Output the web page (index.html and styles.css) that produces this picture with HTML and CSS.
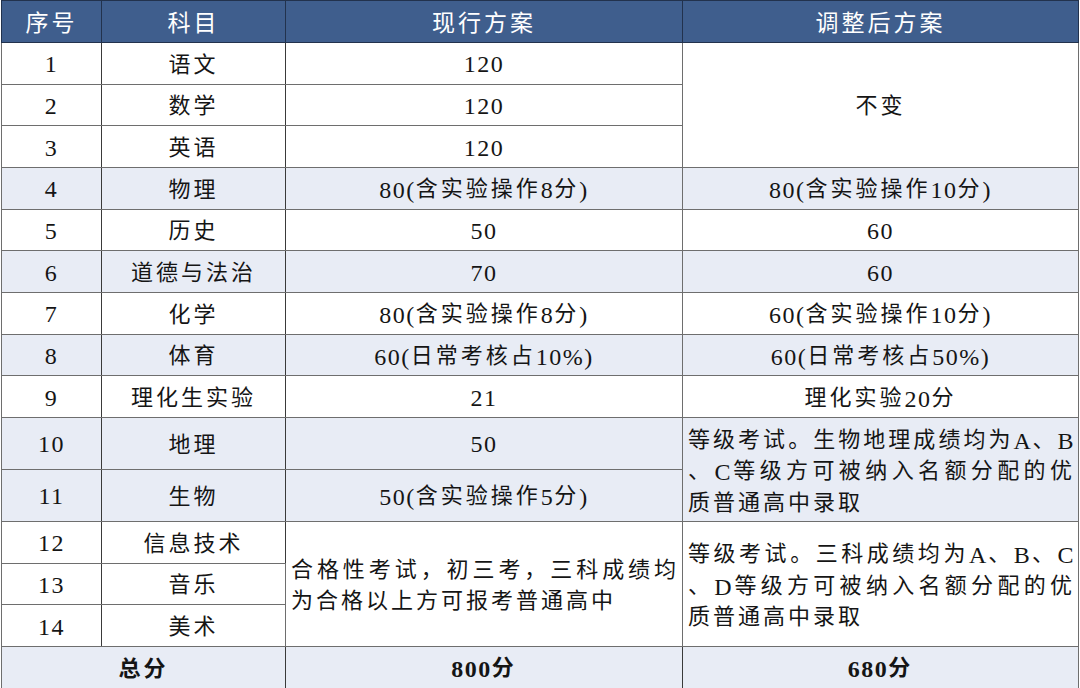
FILE: index.html
```html
<!DOCTYPE html>
<html lang="zh-CN">
<head>
<meta charset="utf-8">
<title>中考科目分值调整</title>
<link rel="stylesheet" href="styles.css">
</head>
<body>
<table class="plan">
  <colgroup>
    <col class="c-no"><col class="c-subj"><col class="c-cur"><col class="c-new">
  </colgroup>
  <thead>
    <tr class="head"><th>序号</th><th>科目</th><th>现行方案</th><th>调整后方案</th></tr>
  </thead>
  <tbody>
    <tr class="r"><td class="num">1</td><td>语文</td><td class="num">120</td><td rowspan="3" class="same">不变</td></tr>
    <tr class="r"><td class="num">2</td><td>数学</td><td class="num">120</td></tr>
    <tr class="r"><td class="num">3</td><td>英语</td><td class="num">120</td></tr>
    <tr class="r alt"><td class="num">4</td><td>物理</td><td><span class="lat">80(</span>含实验操作<span class="lat">8</span>分<span class="lat">)</span></td><td><span class="lat">80(</span>含实验操作<span class="lat">10</span>分<span class="lat">)</span></td></tr>
    <tr class="r"><td class="num">5</td><td>历史</td><td class="num">50</td><td class="num">60</td></tr>
    <tr class="r alt"><td class="num">6</td><td>道德与法治</td><td class="num">70</td><td class="num">60</td></tr>
    <tr class="r"><td class="num">7</td><td>化学</td><td><span class="lat">80(</span>含实验操作<span class="lat">8</span>分<span class="lat">)</span></td><td><span class="lat">60(</span>含实验操作<span class="lat">10</span>分<span class="lat">)</span></td></tr>
    <tr class="r alt"><td class="num">8</td><td>体育</td><td><span class="lat">60(</span>日常考核占<span class="lat">10%)</span></td><td><span class="lat">60(</span>日常考核占<span class="lat">50%)</span></td></tr>
    <tr class="r"><td class="num">9</td><td>理化生实验</td><td class="num">21</td><td>理化实验<span class="lat">20</span>分</td></tr>
    <tr class="r tall alt"><td class="num">10</td><td>地理</td><td class="num">50</td>
      <td rowspan="2" class="para">
        <span class="ln">等级考试。生物地理成绩均为<span class="lat">A</span>、<span class="lat">B</span></span>
        <span class="ln">、<span class="lat">C</span>等级方可被纳入名额分配的优</span>
        <span class="ln last">质普通高中录取</span>
      </td></tr>
    <tr class="r tall alt"><td class="num">11</td><td>生物</td><td><span class="lat">50(</span>含实验操作<span class="lat">5</span>分<span class="lat">)</span></td></tr>
    <tr class="r"><td class="num">12</td><td>信息技术</td>
      <td rowspan="3" class="para">
        <span class="ln">合格性考试，初三考，三科成绩均</span>
        <span class="ln last">为合格以上方可报考普通高中</span>
      </td>
      <td rowspan="3" class="para">
        <span class="ln">等级考试。三科成绩均为<span class="lat">A</span>、<span class="lat">B</span>、<span class="lat">C</span></span>
        <span class="ln">、<span class="lat">D</span>等级方可被纳入名额分配的优</span>
        <span class="ln last">质普通高中录取</span>
      </td></tr>
    <tr class="r"><td class="num">13</td><td>音乐</td></tr>
    <tr class="r"><td class="num">14</td><td>美术</td></tr>
    <tr class="r alt total"><td colspan="2">总分</td><td><span class="lat">800</span>分</td><td><span class="lat">680</span>分</td></tr>
  </tbody>
</table>
</body>
</html>
```

FILE: styles.css
```css
html, body {
  margin: 0;
  padding: 0;
  background: #ffffff;
}

.plan {
  margin-left: 1px;
  width: 1077px;
  border-collapse: collapse;
  table-layout: fixed;
  font-family: "Noto Sans CJK SC", "Liberation Serif", serif;
  font-size: 22px;
  letter-spacing: 3px;
  color: #151515;
}

.c-no { width: 100px; }
.c-subj { width: 184px; }
.c-cur { width: 397px; }
.c-new { width: 396px; }

.plan th,
.plan td {
  box-sizing: border-box;
  border: 1px solid #6e6e6e;
  padding: 0 0 3px 0;
  text-align: center;
  vertical-align: middle;
  font-weight: 400;
  line-height: 30px;
}

.plan td:nth-child(1),
.plan td:nth-child(2) {
  border-right-color: #3a3a3a;
}

.head th {
  height: 42px;
  padding: 0 0 2px 0;
  background: #3f5e8d;
  color: #ffffff;
  font-size: 23px;
  letter-spacing: 3px;
  border-color: #22324d;
}

.r td { height: 41.67px; }
.r.tall td { height: 52px; }
.alt td { background: #e8ecf5; }

.num,
.lat {
  font-family: "Liberation Serif", serif;
  font-size: 24px;
  letter-spacing: 1.5px;
}

.plan td.num {
  padding: 2px 0 0 0;
}

.lat {
  line-height: 1;
  vertical-align: -2px;
}

.plan td.para {
  text-align: justify;
  padding: 0 3px 1px 5px;
  line-height: 31.5px;
}

.ln {
  display: block;
  text-align: justify;
  text-align-last: justify;
}

.ln.last {
  text-align-last: left;
}

.total td {
  font-weight: 700;
}
.total .lat { font-weight: 700; }
```
